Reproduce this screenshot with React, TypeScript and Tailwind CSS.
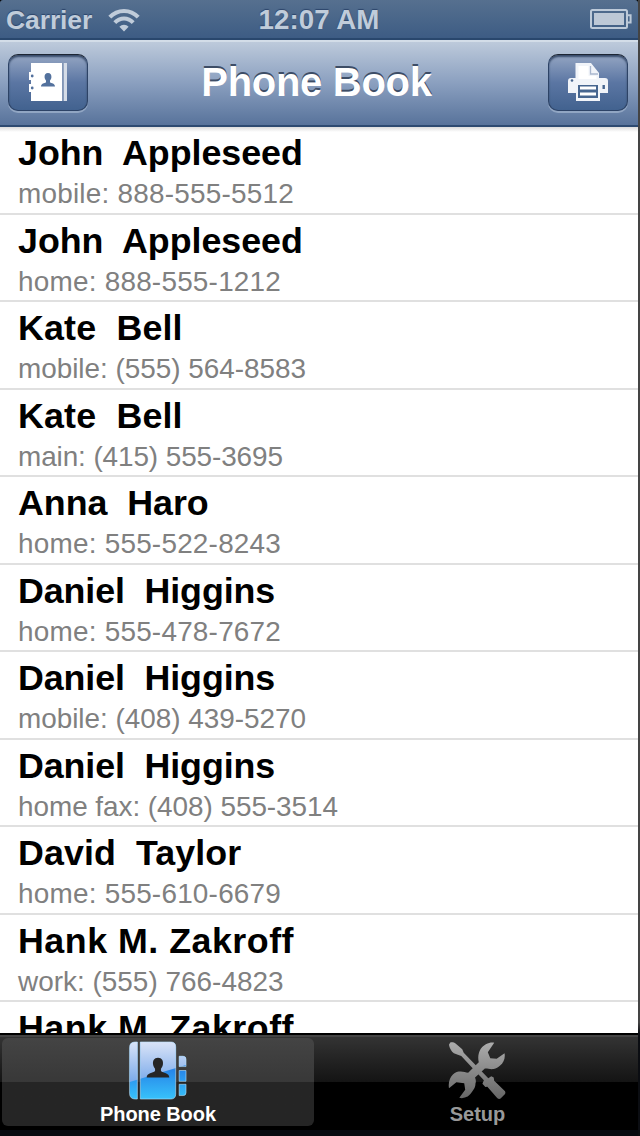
import React from 'react';

type Entry = { name: string; detail?: string; nameClass: string; detailClass?: string };

const ENTRIES: Entry[] = [
  { name: 'John  Appleseed', detail: 'mobile: 888-555-5512', nameClass: 'tracking-[-0.02px]', detailClass: 'tracking-[0.23px]' },
  { name: 'John  Appleseed', detail: 'home: 888-555-1212', nameClass: 'tracking-[-0.02px]', detailClass: 'tracking-[0.23px]' },
  { name: 'Kate  Bell', detail: 'mobile: (555) 564-8583', nameClass: 'tracking-[0.15px]', detailClass: 'tracking-[-0.02px]' },
  { name: 'Kate  Bell', detail: 'main: (415) 555-3695', nameClass: 'tracking-[0.15px]', detailClass: 'tracking-[-0.09px]' },
  { name: 'Anna  Haro', detail: 'home: 555-522-8243', nameClass: 'tracking-[-0.03px]', detailClass: 'tracking-[0.23px]' },
  { name: 'Daniel  Higgins', detail: 'home: 555-478-7672', nameClass: 'tracking-[-0.1px]', detailClass: 'tracking-[0.23px]' },
  { name: 'Daniel  Higgins', detail: 'mobile: (408) 439-5270', nameClass: 'tracking-[-0.1px]', detailClass: 'tracking-[-0.02px]' },
  { name: 'Daniel  Higgins', detail: 'home fax: (408) 555-3514', nameClass: 'tracking-[-0.1px]', detailClass: 'tracking-[-0.04px]' },
  { name: 'David  Taylor', detail: 'home: 555-610-6679', nameClass: 'tracking-[0.08px]', detailClass: 'tracking-[0.23px]' },
  { name: 'Hank M. Zakroff', detail: 'work: (555) 766-4823', nameClass: 'tracking-[0.5px]', detailClass: 'tracking-[0.02px]' },
  { name: 'Hank M. Zakroff', nameClass: 'tracking-[0.5px]' },
];

const WifiIcon = () => (
  <svg width="32" height="24" viewBox="0 0 32 24" fill="none" stroke="#c0ccda" strokeWidth="4">
    <path d="M1.800 9.200C9.500 .8 22.500 .8 30.200 9.200" />
    <path d="M6.800 14.600C12 9 20 9 25.200 14.600" />
    <path d="M16 23.500l-4.600-4.700c2.300-2.800 6.900-2.800 9.200 0z" fill="#c0ccda" stroke="none" />
  </svg>
);

const BatteryIcon = () => (
  <svg width="42" height="20" viewBox="0 0 42 20" fill="none">
    <rect x="1" y="1" width="36" height="18" rx="1.500" stroke="#bdcad9" strokeWidth="2" />
    <rect x="4" y="4" width="30" height="12" fill="#bdc8d6" />
    <path d="M38 6.200h2.600v7.200H38" stroke="#bdcad9" strokeWidth="2" />
  </svg>
);

const ContactsIcon = () => (
  <svg width="40" height="40" viewBox="0 0 40 40">
    <path d="M3 1h31v38H3z" fill="#fff" />
    <path d="M35.500 1h3.500v38h-3.500z" fill="#d5dce7" />
    <path d="M34 1h1.500v38H34z" fill="#8296b6" />
    <path d="M3 10H1v8h3zM3 22H1v8h3z" fill="#fff" />
    <circle cx="4.200" cy="14" r="1.400" fill="#53719d" />
    <circle cx="4.200" cy="26" r="1.400" fill="#53719d" />
    <path d="M20 11c2.400 0 3.800 1.800 3.400 4.600-.2 1.500-.9 2.300-1.400 3v1.700c1.400 1.200 5 1 5 4.300H13c0-3.300 3.600-3.100 5-4.300v-1.700c-.5-.7-1.200-1.500-1.400-3C16.200 12.800 17.600 11 20 11z" fill="#53719d" />
  </svg>
);

const PrinterIcon = () => (
  <svg width="40" height="40" viewBox="0 0 40 40">
    <path d="M7.500 1H23l8 10v5h6q3 0 3 3v12h-8v8H8v-8H0V19q0-3 3-3h4.500z" fill="#f1f4f9" />
    <path d="M10.500 4H20.500v10h8V17h-18z" fill="#fff" />
    <path d="M22.500 4v8H30" fill="none" stroke="#a9b7ce" strokeWidth="1.300" />
    <path d="M10 23h20v13H10z" fill="#46658f" />
    <path d="M12 26h16M12 32h16" stroke="#fff" strokeWidth="3" />
    <circle cx="4" cy="18.500" r="1.300" fill="#46658f" />
    <path d="M34.500 23h2.400v4h-2.400z" fill="#46658f" />
  </svg>
);

const BOOK_PATH =
  'M9 1h-2Q1 1 1 7v46q0 6 6 6h2zM12 1h31q5 0 5 5v48q0 5-5 5H12zM51.500 15.500h4q3 0 3 3v7.500h-7zM51.500 30h7v11h-7zM51.500 44h7v8.500q0 3-3 3h-4z';

const PhoneBookIcon = () => (
  <svg width="60" height="60" viewBox="0 0 60 60">
    <defs>
      <linearGradient id="pb-base" x1="0" y1="0" x2="0" y2="1">
        <stop offset="0" stopColor="#8fb5ed" />
        <stop offset=".5" stopColor="#2787e9" />
        <stop offset="1" stopColor="#38c4fb" />
      </linearGradient>
      <linearGradient id="pb-shine" x1="0" y1="0" x2="0" y2="1">
        <stop offset="0" stopColor="#dce5f8" />
        <stop offset="1" stopColor="#79a9ea" />
      </linearGradient>
      <clipPath id="pb-clip">
        <path d={BOOK_PATH} />
      </clipPath>
    </defs>
    <g clipPath="url(#pb-clip)">
      <path d="M0 0h60v60H0z" fill="url(#pb-base)" />
      <path d="M0 0h60v24Q30 33 0 42z" fill="url(#pb-shine)" />
    </g>
    <path d={BOOK_PATH} fill="none" stroke="#b9e2fd" strokeOpacity=".6" />
    <path d="M30 17c4 0 5.600 3 5 7-.3 2-1 3-2 4.300v2.200c2 2 8.500 2 8.500 6.500h-23c0-4.500 6.500-4.500 8.500-6.500v-2.200c-1-1.300-1.700-2.300-2-4.300-.6-4 1-7 5-7z" fill="#262626" />
  </svg>
);

const ToolsIcon = () => (
  <svg width="58" height="60" viewBox="0 -1 58 60">
    <defs>
      <linearGradient id="tool-fill" gradientUnits="userSpaceOnUse" x1="0" y1="0" x2="0" y2="58">
        <stop offset="0" stopColor="#adadad" />
        <stop offset="1" stopColor="#666" />
      </linearGradient>
    </defs>
    <g fill="url(#tool-fill)">
      <path d="M46.500 .7L40 10.500l2.500 6 6.500 .5 8-5.500c1 5-1 10-4.500 12.500-2 2-4 3-6.500 3.500-4 .6-7-1-9-.5L27 36c.8 2 1.200 4 .5 6 0 4-1.500 6-3.500 8.500-2 3-4 5-6 5.500-3 1.500-5 1.200-7 .8l6-8.300-1-6.500-8-1-7.500 6C-.5 41 1.500 36 4.500 33c2.500-2.500 5-3 8-3 3 .1 5 1 7.500 1.200L30.800 20.500c-.7-3-.8-6 .2-9.500 1.500-5 4-7 7-8.800 3-1.500 6-1.900 8.500-1.500z" />
      <path d="M1.800 .6L.5 2.700C1 6 3 9.500 5.500 11.500L9.500 13l3.500 1.300L36 39l-1.500 3.500 3 3.300 2-.3L49.500 57q1.800 1.500 3.500 .5l4.500-4.500q.8-1.500 0-3L46.500 39.500 46 36l-2.500-1.200L40.500 37 15.500 11 14 7.500 7.500 1.800C5.500 .3 3.500 0 1.800 .6z" />
    </g>
  </svg>
);

const NavButton = ({ children }: { children: React.ReactNode }) => (
  <button className="flex h-[57px] w-20 items-center justify-center rounded-[10px] border border-[#2d4366] border-t-[#1d2634] bg-linear-to-b from-[#94a5c2] via-[#5b76a3] to-[#42628f] shadow-[inset_0_2px_2px_#364a69,0_2px_0_#91a6c3]">
    {children}
  </button>
);

export default function App() {
  return (
    <div className="flex h-[1136px] w-[640px] overflow-hidden bg-black font-['Liberation_Sans',Arial,sans-serif]">
      <div className="flex w-[638px] flex-col">
        {/* Status bar */}
        <div className="grid h-10 shrink-0 grid-cols-[1fr_auto_1fr] items-center rounded-t-[3px] border-b-2 border-[#29476d] bg-linear-to-b from-[#56708f] to-[#3d5c84] px-[6px] text-[27.700px] leading-none font-bold text-[#c0ccda] [text-shadow:0_-1px_1px_#2c456b]">
          <div className="flex items-center gap-4 pt-0.5">
            <span className="text-[26.500px] tracking-[-0.1px]">Carrier</span>
            <WifiIcon />
          </div>
          <span className="pt-0.5 tracking-[0.05px]">12:07 AM</span>
          <div className="flex justify-end"><BatteryIcon /></div>
        </div>

        {/* Navigation bar */}
        <div className="flex h-[87px] shrink-0 items-center justify-between border-t-2 border-b-2 border-t-[#d3dde8] border-b-[#2d4a71] bg-linear-to-b from-[#bdcadb] via-[#8a9fbf] to-[#58739b] px-2 pr-[10px] pb-[3px]">
          <NavButton><ContactsIcon /></NavButton>
          <h1 className="pr-[3px] text-[40px] leading-none font-bold tracking-[-0.3px] text-white [text-shadow:0_-2px_0_#3d4d66]">Phone Book</h1>
          <NavButton><PrinterIcon /></NavButton>
        </div>

        {/* Numbers */}
        <div className="min-h-0 flex-1 overflow-hidden bg-white bg-linear-to-b from-[#dcdcdc] to-white to-[5px]">
          {ENTRIES.map((entry, i) => (
            <div key={i} className="flex h-[87.550px] flex-col border-b-2 border-[#e0e0e0] pt-[6px] pl-[18px] whitespace-pre">
              <span className={`text-[35.800px] leading-[41px] font-bold text-black ${entry.nameClass}`}>{entry.name}</span>
              {entry.detail && (
                <span className={`text-[27.900px] leading-[39.500px] text-[#808080] ${entry.detailClass}`}>{entry.detail}</span>
              )}
            </div>
          ))}
        </div>

        {/* Tab bar */}
        <div className="flex h-[103px] shrink-0 border-t-2 border-b-[6px] border-t-black border-b-[#07090f] bg-linear-to-b from-[#353535] from-0% via-[#141414] via-[47px] to-black to-[47px] shadow-[inset_0_2px_0_#444]">
          <button className="mt-[3px] ml-0.5 flex h-[88px] w-[312px] flex-col items-center rounded-[6px] bg-linear-to-b from-[#444] from-0% via-[#383838] via-[44px] to-[#252525] to-[44px] pt-[3px]">
            <PhoneBookIcon />
            <span className="mt-[3px] text-[20px] leading-[23px] font-bold tracking-[-0.07px] text-white">Phone Book</span>
          </button>
          <button className="mt-[3px] ml-[4px] flex h-[88px] w-[318px] flex-col items-center pt-[3px]">
            <ToolsIcon />
            <span className="mt-[3px] pl-px text-[20px] leading-[23px] font-bold text-[#999]">Setup</span>
          </button>
        </div>
      </div>
      <div className="w-0.5 bg-linear-to-b from-[#444] from-[90%] to-[#0b0d12] to-[91%]" />
    </div>
  );
}
